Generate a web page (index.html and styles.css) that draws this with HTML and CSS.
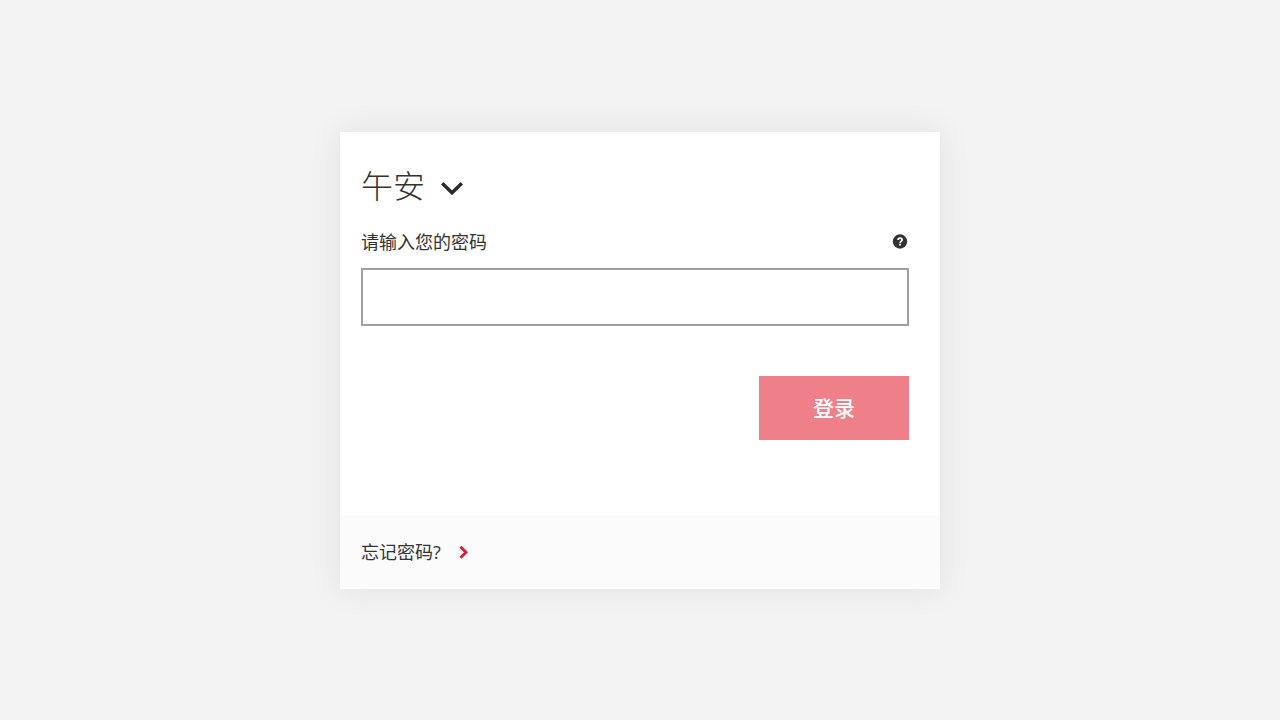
FILE: index.html
```html
<!DOCTYPE html>
<html lang="zh-CN">
<head>
<meta charset="utf-8">
<meta name="viewport" content="width=device-width, initial-scale=1">
<title>登录</title>
<link rel="stylesheet" href="styles.css">
</head>
<body>
<main class="card">
  <form class="login">
    <h1 class="greeting">
      <span>午安</span>
      <button class="icon-button" type="button" aria-label="切换">
        <svg width="24" height="20" viewBox="0 0 24 20" fill="none" stroke="#2b2b2b" stroke-width="3.4"><path d="M2.200 7.200l9.800 9.600 9.800-9.600"/></svg>
      </button>
    </h1>
    <div class="label-row">
      <label for="password">请输入您的密码</label>
      <button class="icon-button" type="button" aria-label="帮助">
        <svg width="16" height="16" viewBox="0 0 16 16" fill="none"><circle cx="8" cy="7.500" r="7.200" fill="#333"/><path d="M6 5.900c0-2.500 4.100-2.500 4.100 0 0 1.500-2 1.400-2 3" stroke="#fff" stroke-width="1.700"/><path d="M8 9.800v1.700" stroke="#fff" stroke-width="1.800"/></svg>
      </button>
    </div>
    <input class="password" id="password" type="password">
    <button class="submit" type="submit">登录</button>
  </form>
  <footer class="footer">
    <a class="forgot" href="#">
      <span>忘记密码?</span>
      <svg width="10" height="14" viewBox="0 0 10 14" fill="none" stroke="#d6202f" stroke-width="2.800"><path d="M1.500 1.800L7 7.300l-5.500 5.500"/></svg>
    </a>
  </footer>
</main>
</body>
</html>
```
FILE: styles.css
```css
* {
  box-sizing: border-box;
}

body {
  margin: 0;
  min-height: 100vh;
  display: flex;
  align-items: center;
  justify-content: center;
  background: #f3f3f3;
  color: #333;
  font-family: "Open Sans", "Noto Sans CJK SC", sans-serif;
}

.card {
  width: 100%;
  max-width: 600px;
  background: #fff;
  box-shadow: 0 0 32px rgba(0, 0, 0, 0.08);
}

.login {
  display: flex;
  flex-direction: column;
  padding: 32px 31px 75px 21px;
}

.greeting {
  display: flex;
  align-items: center;
  gap: 15px;
  margin: 0 0 22px;
  font-size: 32px;
  line-height: 44px;
  font-weight: 300;
}

.icon-button {
  display: flex;
  padding: 0;
  border: 0;
  background: none;
  cursor: pointer;
}

.label-row {
  display: flex;
  align-items: center;
  justify-content: space-between;
  margin-bottom: 14px;
  padding-right: 1px;
  font-size: 18px;
  line-height: 24px;
}

.password {
  width: 100%;
  height: 58px;
  padding: 0 16px;
  border: 2px solid #a0a0a0;
  border-radius: 0;
  background: #fff;
  font: inherit;
  font-size: 20px;
}

.submit {
  align-self: flex-end;
  width: 150px;
  margin-top: 50px;
  padding: 16px;
  border: 0;
  background: #ef7f88;
  color: #fff;
  font: inherit;
  font-size: 21px;
  line-height: 32px;
  font-weight: 500;
}

.footer {
  padding: 25px 21px 23px;
  border-bottom: 2px solid #fff;
  background: #fbfbfb;
}

.forgot {
  display: inline-flex;
  align-items: center;
  gap: 18px;
  color: #333;
  font-size: 18px;
  line-height: 24px;
  text-decoration: none;
  vertical-align: top;
}
```
